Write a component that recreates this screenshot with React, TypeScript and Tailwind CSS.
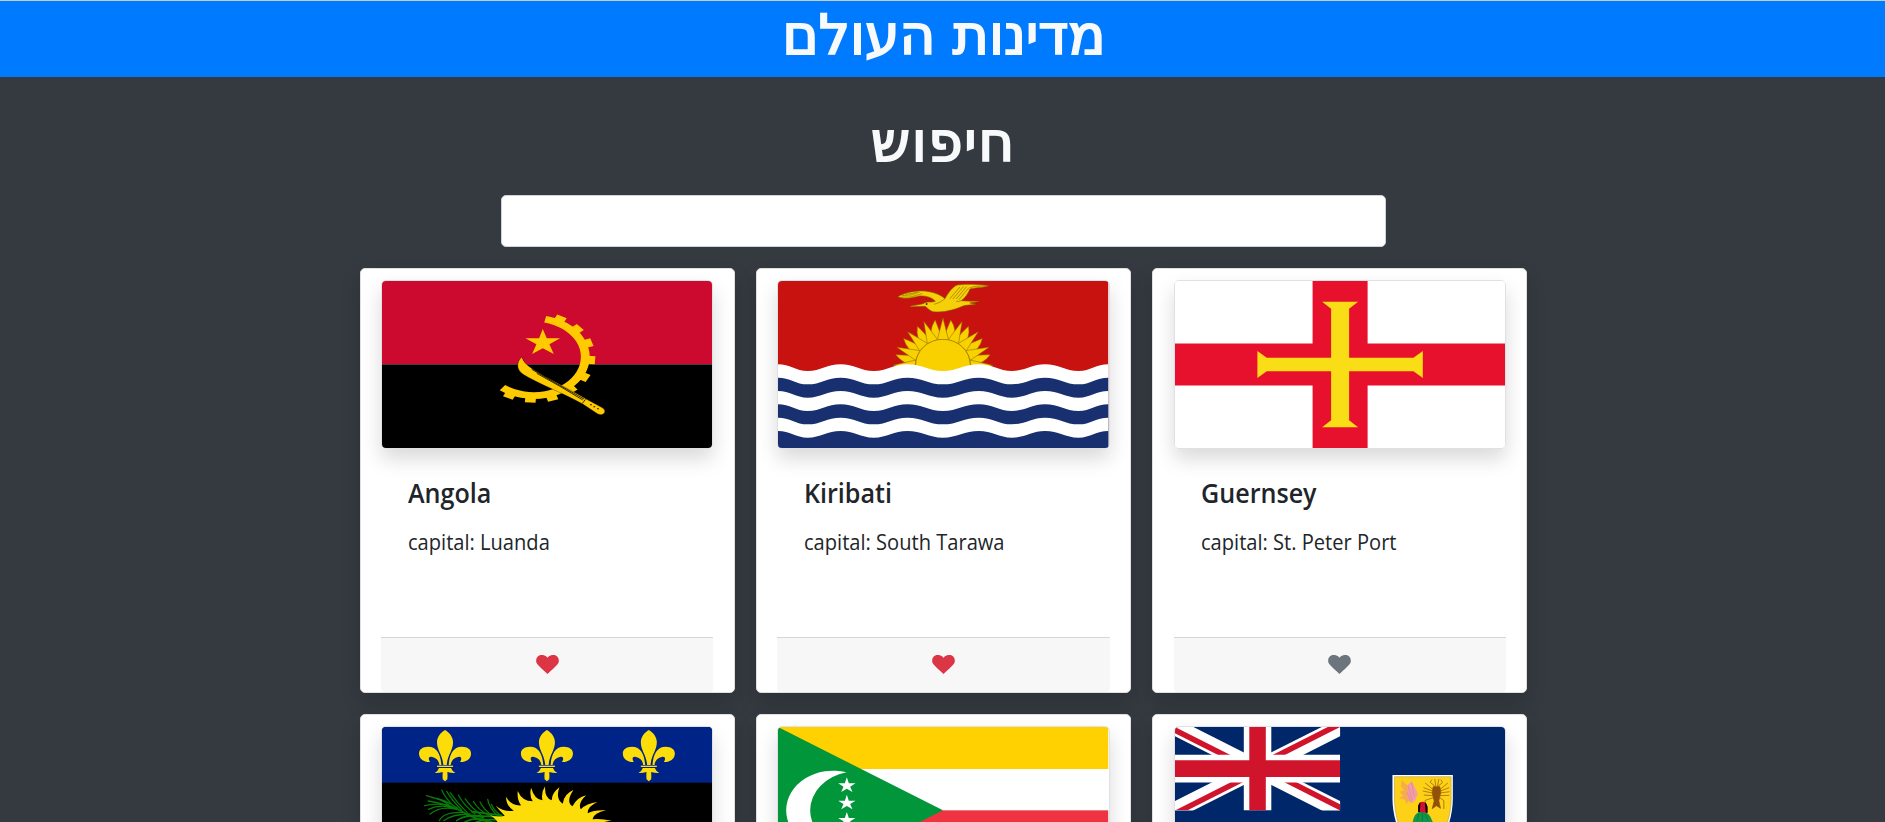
import type { ReactNode } from "react";

const flagClass = "block h-[167px] w-full";

function Flag({ box, children }: { box: string; children: ReactNode }) {
  return (
    <svg className={flagClass} viewBox={box} preserveAspectRatio="none" aria-hidden="true">
      {children}
    </svg>
  );
}

function Angola() {
  const teeth = [-63, -41, -19, 4, 28, 50, 72, 94, 116];
  return (
    <Flag box="96 303 990 501">
      <rect x="96" y="303" width="990" height="250" fill="#cc092f" />
      <rect x="96" y="553" width="990" height="251" fill="#000" />
      <g transform="translate(553 531) scale(1.33 1)">
        <path d="M24.3-113.5A116 116 0 1 1-72 91.6" fill="none" stroke="#ffcb00" strokeWidth="20" />
        {teeth.map((a) => (
          <path key={a} d="M120-12H137V12H120Z" fill="#ffcb00" transform={`rotate(${a})`} />
        ))}
      </g>
      <path d="M578 447L590 475H630L598 493L611 522L578 505L546 522L559 493L526 475H567Z" fill="#ffcb00" />
      <path
        d="M515 531C500 545 497 568 519 583C560 609 630 635 698 672L742 701Q757 709 764 697Q766 688 754 682L708 657C640 617 570 585 535 558Q520 547 515 531Z"
        fill="#ffcb00"
        stroke="#000"
        strokeWidth="1"
      />
      <path d="M545 568Q620 611 702 657M560 580Q630 618 698 660M697 670L706 658" fill="none" stroke="#000" strokeWidth="2.4" />
      <path d="M720 674h5M730 680h5M741 686h5" stroke="#000" strokeWidth="3" />
    </Flag>
  );
}

const wavePoints: [number, number][] = [
  [114, 0], [203, 20], [302, 0], [402, 20], [503, 0], [610, 20], [718, 0], [818, 20], [917, 0], [1018, 20], [1107, 0],
];

function wavePath(top: number) {
  let d = `M114 ${top}`;
  for (let i = 1; i < wavePoints.length; i++) {
    const [px, py] = wavePoints[i - 1];
    const [x, y] = wavePoints[i];
    const mid = (x - px) * 0.4;
    d += `C${px + mid} ${top + py} ${x - mid} ${top + y} ${x} ${top + y}`;
  }
  return `${d}V570H114Z`;
}

function sunRay(index: number) {
  const at = (deg: number, rx: number, ry: number) => {
    const t = (deg * Math.PI) / 180;
    return `${(610 - rx * Math.cos(t)).toFixed(1)} ${(316 - ry * Math.sin(t)).toFixed(1)}`;
  };
  const a = index * 11.25;
  if (index % 2 === 0) {
    return `M${at(a - 11.5, 84, 79)}L${at(a, 150, 142)}L${at(a + 11.5, 84, 79)}Z`;
  }
  const lean = index < 8 ? 1 : -1;
  return `M${at(a - 9, 82, 78)}Q${at(a - 9 - lean * 3, 115, 110)} ${at(a + lean * 2, 146, 138)}Q${at(a + 8 - lean * 3, 120, 114)} ${at(a + 9, 82, 78)}Z`;
}

function Kiribati() {
  const odd = [1, 3, 5, 7, 9, 11, 13, 15];
  const even = [0, 2, 4, 6, 8, 10, 12, 14, 16];
  return (
    <Flag box="114 63 993 501">
      <rect x="114" y="63" width="993" height="501" fill="#c8120f" />
      <g fill="#f9d000" stroke="#8b6a00" strokeWidth="1.6">
        {odd.map((i) => <path key={i} d={sunRay(i)} />)}
        {even.map((i) => <path key={i} d={sunRay(i)} />)}
        <ellipse cx="610" cy="315" rx="82" ry="77" />
      </g>
      <path
        d="M474 110C500 94 548 87 582 98C602 104 611 112 616 116C627 97 639 80 653 75C680 71 717 73 747 77C735 83 713 81 691 87C686 101 677 113 665 122C685 124 700 123 719 124C705 128 700 127 691 129L708 133C691 136 680 134 668 139C648 149 609 159 580 155C565 150 562 140 555 139L512 140C512 134 542 137 556 128C566 123 574 129 587 124C578 111 555 107 540 108C520 111 500 121 474 110Z"
        fill="#f5cf08"
        stroke="#806000"
        strokeWidth="1.8"
      />
      <path
        d="M476 112Q515 115 548 101M486 107Q516 108 540 96M497 103Q520 101 534 95M631 116L661 81M640 117L672 79M650 117L681 80M658 119L688 83M616 116Q603 129 583 133M690 84Q708 76 743 79M665 122Q655 126 650 124"
        fill="none"
        stroke="#8b6a00"
        strokeWidth="1.8"
      />
      <circle cx="561" cy="132" r="3" fill="#513f00" />
      {[313, 353, 393, 433, 473, 513].map((top, i) => (
        <path key={top} d={wavePath(top)} fill={i % 2 === 0 ? "#fff" : "#18306f"} />
      ))}
    </Flag>
  );
}

function Guernsey() {
  return (
    <Flag box="105 63 990 501">
      <rect x="105" y="63" width="990" height="501" fill="#fff" />
      <path d="M517.5 63H682.5V250.5H1095V376.5H682.5V564H517.5V376.5H105V250.5H517.5Z" fill="#e8112d" />
      <path
        d="M546 125H654L627 146V293H820L848 273V354L820 334H627V481L654 502H546L573 481V334H380L352 354V273L380 293H573V146Z"
        fill="#f9dd16"
      />
    </Flag>
  );
}

function FleurDeLis({ x }: { x: number }) {
  return (
    <g transform={`translate(${x} 0)`} fill="#fcdd09">
      <path d="M0 120C13 128 24 140 24 157C24 181 8 194 5 225H-5C-8 194-24 181-24 157C-24 140-13 128 0 120Z" />
      <path d="M11 225C13 195 23 170 51 170C68 170 79 179 78 192C77 208 62 217 45 216C51 208 50 199 41 200C26 203 18 212 17 225Z" />
      <path d="M-11 225C-13 195-23 170-51 170C-68 170-79 179-78 192C-77 208-62 217-45 216C-51 208-50 199-41 200C-26 203-18 212-17 225Z" />
      <path d="M-24 227H24V231H-24Z" />
      <path d="M-18 234H18Q22 245 31 249Q20 250 7 246Q8 260 7 268L0 274L-7 268Q-8 260-7 246Q-20 250-31 249Q-22 245-18 234Z" />
    </g>
  );
}

function Guadeloupe() {
  return (
    <Flag box="96 111 990 501">
      <rect x="96" y="111" width="990" height="501" fill="#000" />
      <rect x="96" y="111" width="990" height="167" fill="#002387" />
      {[285, 590.5, 896].map((x) => <FleurDeLis key={x} x={x} />)}
      <g fill="none" stroke="#067d06" strokeLinecap="round">
        <path d="M235 333Q300 343 350 372T480 400" strokeWidth="5" />
        <path
          d="M275 300Q287 327 315 352M290 304Q305 330 335 360M300 308Q322 340 352 368M325 315Q340 345 375 372M345 326Q365 355 392 374M229 317Q275 328 300 347M224 347Q267 337 305 349M235 358Q270 341 310 354M240 372Q272 346 320 358M268 392Q278 366 338 367M281 392Q305 373 360 372M370 334Q382 358 417 378M390 336Q400 358 430 380M413 328Q418 357 446 380M424 343Q432 365 456 378M245 323Q283 326 323 355"
          strokeWidth="3.8"
        />
        <path d="M320 392Q350 370 400 382M340 399Q370 378 420 392M370 400Q400 386 445 390M350 375L460 382M365 365L455 376" strokeWidth="5" />
      </g>
      <path
        d="M411 372Q436 384 464 377Q449 362 437 347Q462 367 491 362Q468 348 468 320Q483 348 513 346Q500 330 503 303Q516 334 548 334Q537 318 543 293Q553 328 577 331Q572 308 585 289Q583 324 605 331Q604 310 628 292Q615 326 638 341Q641 312 670 300Q646 335 667 349Q681 322 708 316Q682 340 692 358Q709 340 742 336Q711 350 713 370Q731 359 768 361Q731 368 727 388Q747 384 785 392Q750 395 741 410V612H445V400Q434 381 411 372Z"
        fill="#fcdd09"
      />
    </Flag>
  );
}

function Comoros() {
  return (
    <Flag box="114 111 993 501">
      <rect x="114" y="111" width="993" height="126" fill="#ffd100" />
      <rect x="114" y="237" width="993" height="124" fill="#fff" />
      <rect x="114" y="361" width="993" height="126" fill="#ef3340" />
      <rect x="114" y="487" width="993" height="125" fill="#003da5" />
      <path d="M114 111L610 361L114 611Z" fill="#009639" />
      <path d="M320 247A141 119 0 1 0 320 475A141 117 0 0 1 320 247Z" fill="#fff" />
      {[286, 338, 390, 442].map((y) => (
        <path key={y} d="M0-24L6-6H26L10 4L17 20L0 10L-17 20L-10 4L-26-6H-6Z" fill="#fff" transform={`translate(321 ${y})`} />
      ))}
    </Flag>
  );
}

function TurksAndCaicos() {
  return (
    <Flag box="105 111 990 501">
      <rect x="105" y="111" width="990" height="501" fill="#00276a" />
      <clipPath id="canton"><path d="M0 0H60V30H0Z" /></clipPath>
      <clipPath id="saltire"><path d="M30 15H60V30ZM30 15V30H0ZM30 15H0V0ZM30 15V0H60Z" /></clipPath>
      <g transform="translate(105 111) scale(8.25 8.34)" clipPath="url(#canton)" fill="none">
        <path d="M0 0L60 30M60 0L0 30" stroke="#fff" strokeWidth="6" />
        <path d="M0 0L60 30M60 0L0 30" stroke="#cf142b" strokeWidth="4" clipPath="url(#saltire)" />
        <path d="M30 0V30M0 15H60" stroke="#fff" strokeWidth="10" />
        <path d="M30 0V30M0 15H60" stroke="#cf142b" strokeWidth="6" />
      </g>
      <path d="M757 255H938V325C938 400 905 470 847 500C790 470 757 400 757 325Z" fill="#fff" />
      <path d="M763 260H933V325C933 395 903 462 847 493C792 462 763 395 763 325Z" fill="#fcd116" stroke="#a58a4d" strokeWidth="1.5" />
      <path d="M785 270L801 286L815 274L821 300L829 313L817 325L818 337L806 334L798 343L795 329L777 325L789 317L779 305L792 301L782 289Z" fill="#f6ab53" />
      <path d="M815 273L824 292L833 310L826 330L814 340L804 327L801 311L804 286Z" fill="#f39caa" />
      <path d="M804 288L816 330M814 278L822 319M801 307L812 335" stroke="#d77f80" strokeWidth="1.5" />
      <g stroke="#925108" fill="none" strokeWidth="2">
        <path d="M878 298L855 279M877 303L850 293M877 309L848 303M878 317L851 315M880 323L855 331V349M900 298L923 279M901 303L927 293M901 309L928 305M900 317L927 316M899 323L911 332V357M885 289L870 277L875 269M893 289L907 278L902 269M887 289L884 267M892 289L896 267" />
        <path d="M879 290H899L902 307L896 332L901 355L889 347L876 356L882 333L876 309Z" fill="#925108" />
      </g>
      <path d="M817 400Q821 368 841 365Q868 362 879 400V470H817Z" fill="#119548" />
      <path d="M831 392L836 372M847 394V370M863 391L855 371" stroke="#087234" strokeWidth="2" />
      <path d="M834 366V348Q838 335 847 335Q858 335 862 350V368Z" fill="#d21034" />
      <path d="M834 366V348Q837 338 841 337L839 367ZM862 368V350Q859 339 854 336L857 368Z" fill="#000" />
    </Flag>
  );
}

function Heart({ liked }: { liked: boolean }) {
  return (
    <svg
      viewBox="558 584 68 57"
      className={liked ? "h-[19px] w-[23px] fill-[#dc3545]" : "h-[19px] w-[23px] fill-[#6c757d]"}
      aria-hidden="true"
    >
      <path d="M592 592C597 585 605 584 610 584C620 584 626 592 626 601C626 611 620 614 592 641C564 614 558 611 558 601C558 592 564 584 574 584C579 584 587 585 592 592Z" />
    </svg>
  );
}

interface Country {
  code: string;
  flag: ReactNode;
  details?: { name: string; capital: string; liked: boolean };
}

const countries: Country[] = [
  { code: "AO", flag: <Angola />, details: { name: "Angola", capital: "Luanda", liked: true } },
  { code: "KI", flag: <Kiribati />, details: { name: "Kiribati", capital: "South Tarawa", liked: true } },
  { code: "GG", flag: <Guernsey />, details: { name: "Guernsey", capital: "St. Peter Port", liked: false } },
  { code: "GP", flag: <Guadeloupe /> },
  { code: "KM", flag: <Comoros /> },
  { code: "TC", flag: <TurksAndCaicos /> },
];

function CountryCard({ flag, details }: Country) {
  return (
    <article className="flex h-[425px] flex-col rounded-[5px] border border-[#dfdfdf] bg-white pt-[11px] pr-[20.3px] pl-[20.2px] shadow-[0_10px_20px_rgba(0,0,0,0.15)]">
      <div className="h-[169px] shrink-0 overflow-hidden rounded-[5px] border border-[#dee2e6] shadow-[0_10px_20px_rgba(0,0,0,0.15)]">
        {flag}
      </div>
      {details && (
        <>
          <div className="flex-1 px-[27px] pt-[27px] text-[#212529]">
            <h5 className="origin-left scale-x-[0.93] text-[27px] leading-[33px] font-semibold whitespace-nowrap">{details.name}</h5>
            <p className="mt-4 origin-left scale-x-[0.893] text-[22.5px] leading-[34px] whitespace-nowrap">capital: {details.capital}</p>
          </div>
          <footer className="flex h-[55px] items-center justify-center rounded-b-[4px] border-t border-[#d5d6d7] bg-[#f7f7f7] pb-0.5">
            <button type="button" aria-label="like">
              <Heart liked={details.liked} />
            </button>
          </footer>
        </>
      )}
    </article>
  );
}

export default function App() {
  return (
    <div className="h-[822px] overflow-hidden bg-[#343a40] font-['Open_Sans',sans-serif]">
      <header className="flex h-[77px] items-center justify-center border-t border-[#c3cbd3] bg-[#007bff] pb-[8px] pl-[3px]">
        <h1 dir="rtl" className="font-['DejaVu_Sans',sans-serif] text-[55px] leading-[64px] text-[#f8f9fa] [-webkit-text-stroke:2px_#f8f9fa]">
          מדינות העולם
        </h1>
      </header>
      <main className="flex flex-col items-center pt-[27px] pl-[2px]">
        <h1 dir="rtl" className="font-['DejaVu_Sans',sans-serif] text-[55px] leading-[76px] tracking-[1.7px] text-[#f8f9fa] [-webkit-text-stroke:2px_#f8f9fa]">
          חיפוש
        </h1>
        <input type="text" aria-label="search" className="mt-[15px] h-[52px] w-[885px] rounded-[5px] border border-[#ced4da] bg-white px-4 text-[22px]" />
        <section className="mt-[21px] grid w-[1167.1px] grid-cols-3 gap-x-[21.5px] gap-y-[21px]">
          {countries.map((country) => (
            <CountryCard key={country.code} {...country} />
          ))}
        </section>
      </main>
    </div>
  );
}
